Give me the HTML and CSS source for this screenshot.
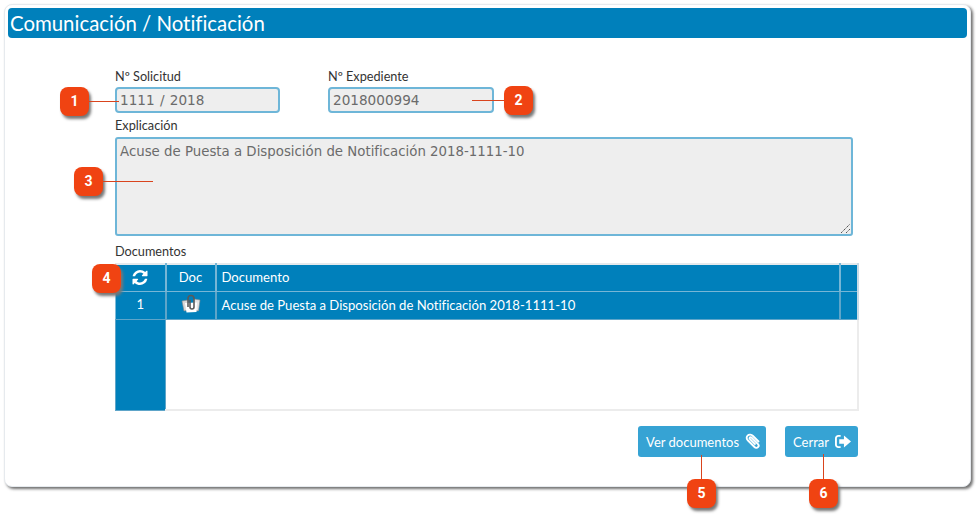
FILE: index.html
```html
<!DOCTYPE html>
<html lang="es">
<head>
<meta charset="utf-8">
<title>Comunicación / Notificación</title>
<link rel="stylesheet" href="styles.css">
</head>
<body>
<main class="panel">
  <h1 class="title">Comunicación / Notificación</h1>
  <div class="form">
    <div class="row">
      <div class="field first">
        <label class="label">Nº Solicitud</label>
        <div class="input">1111 / 2018</div>
      </div>
      <div class="field second">
        <label class="label">Nº Expediente</label>
        <div class="input">2018000994</div>
      </div>
    </div>
    <label class="label expl">Explicación</label>
    <div class="textarea">Acuse de Puesta a Disposición de Notificación 2018-1111-10
      <svg class="grip" width="11" height="11" viewBox="0 0 11 11"><path d="M1 10 10 1M6 10l4-4" stroke="#555" stroke-width="1" stroke-dasharray="1.5 .6" fill="none"/></svg>
    </div>
    <label class="label docs">Documentos</label>
    <table class="grid">
      <colgroup><col class="c1"><col class="c2"><col><col class="c4"></colgroup>
      <thead>
        <tr>
          <th class="center"><svg class="refresh" width="16" height="15" viewBox="0 0 1536 1536"><path fill="#fff" d="M1511 928q0 5-1 7-64 268-268 434.500T764 1536q-146 0-282.500-55T238 1324l-129 129q-19 19-45 19t-45-19-19-45V960q0-26 19-45t45-19h448q26 0 45 19t19 45-19 45l-137 137q71 66 161 102t187 36q134 0 250-65t186-179q11-17 53-117 8-23 30-23h192q13 0 22.500 9.500t9.500 22.500zm25-800v448q0 26-19 45t-45 19h-448q-26 0-45-19t-19-45 19-45l138-138Q969 256 768 256q-134 0-250 65T332 500q-11 17-53 117-8 23-30 23H50q-13 0-22.500-9.500T18 608v-7q65-268 270-434.500T768 0q146 0 284 55.500T1297 212l130-129q19-19 45-19t45 19 19 45z"/></svg></th>
          <th class="center">Doc</th>
          <th>Documento</th>
          <th></th>
        </tr>
      </thead>
      <tbody>
        <tr class="data">
          <td class="center"><span class="num">1</span></td>
          <td class="center"><svg class="clip" width="20" height="20" viewBox="0 0 20 20"><path d="M1 7l6-1 1 10-5 1Z" fill="#d8d8d8" stroke="#8a8a8a" stroke-width=".6"/><path d="M13 5l6 1-1.500 11-5.500-1Z" fill="#e4e4e4" stroke="#8a8a8a" stroke-width=".6"/><path d="M4 9l12-.5-.5 9.500-10 .5Z" fill="#fff"/><path d="M7 13V4.500a3 3 0 0 1 6 0V13a2 2 0 0 1-4 0V6" fill="none" stroke="#5a5a5a" stroke-width="1.600"/></svg></td>
          <td>Acuse de Puesta a Disposición de Notificación 2018-1111-10</td>
          <td></td>
        </tr>
        <tr class="filler">
          <td></td><td colspan="3"></td>
        </tr>
      </tbody>
    </table>
    <div class="actions">
      <button class="btn wide">Ver documentos
        <svg width="16" height="17" viewBox="0 0 16 17"><path d="M14 9 8 3C6.500 1.500 4 1.200 2.600 2.600S1.400 6 3 7.500l6.500 6.500c1 1 2.500 1.200 3.500.2s.8-2.400-.2-3.400L6.500 4.600c-.6-.6-1.300-.6-1.700-.2s-.4 1.100.2 1.700l5.500 5.500" fill="none" stroke="#fff" stroke-width="1.900"/></svg>
      </button>
      <button class="btn">Cerrar
        <svg width="16" height="15" viewBox="0 0 17 15"><path d="M6 1.500H3.500A2.500 2.500 0 0 0 1 4v7a2.500 2.500 0 0 0 2.500 2.500H6" fill="none" stroke="#fff" stroke-width="2"/><path d="M9.500 1l7.500 6.500L9.500 14v-4H4.500V5h5Z" fill="#fff"/></svg>
      </button>
    </div>
  </div>
</main>

<div class="callout n1">1</div>
<div class="line l1"></div>
<div class="callout n2">2</div>
<div class="line l2"></div>
<div class="callout n3">3</div>
<div class="line l3"></div>
<div class="callout n4">4</div>
<div class="callout n5">5</div>
<div class="line l5"></div>
<div class="callout n6">6</div>
<div class="line l6"></div>
</body>
</html>
```
FILE: styles.css
```css
* { box-sizing: border-box; }
html, body { margin: 0; height: 100%; background: #fff; overflow: hidden; }
body { position: relative; padding: 4px 0 0 4px; font-family: "Lato", "Open Sans", sans-serif; color: #333; font-variant-ligatures: none; }

.panel {
  width: 967px;
  height: 483px;
  padding: 3px 3px 0 3px;
  background: #fff;
  border: 1px solid #e6eaee;
  border-radius: 8px;
  box-shadow: 2px 2px 3px #6f6f6f;
}
.title {
  margin: 0;
  height: 30px;
  padding-left: 2px;
  background: #0080bb;
  border-radius: 4px;
  color: #fff;
  font-size: 20.400px;
  font-weight: 400;
  line-height: 30px;
}
.form { padding: 29px 0 0 107px; }
.row { display: flex; }
.field { display: flex; flex-direction: column; }
.first { width: 213px; }
.second { width: 166px; }
.label { display: block; font-size: 12.700px; line-height: 19px; height: 20px; color: #333; }
.input {
  height: 26px;
  padding-left: 3px;
  background: #eee;
  border: 2px solid #6eb6d8;
  border-radius: 4px;
  font-family: "DejaVu Sans", sans-serif;
  font-size: 13.600px;
  line-height: 22px;
  color: #6b6b6b;
}
.first .input { width: 165px; word-spacing: 1px; }
.second .input { width: 166px; }
.expl { margin-top: 3px; height: 21px; }
.textarea {
  position: relative;
  width: 738px;
  height: 99px;
  padding: 4px 3px;
  background: #eee;
  border: 2px solid #6eb6d8;
  border-radius: 3px;
  font-family: "DejaVu Sans", sans-serif;
  font-size: 13.330px;
  line-height: 18px;
  color: #6b6b6b;
}
.grip { position: absolute; right: 0; bottom: 0; }
.docs { margin-top: 5px; height: 22px; padding-top: 1px; }

.grid {
  width: 744px;
  height: 148px;
  border-collapse: collapse;
  table-layout: fixed;
  font-size: 13.100px;
  color: #fff;
}
.c1, .c2 { width: 50px; }
.c4 { width: 18px; }
.grid th, .grid td {
  padding: 0 0 0 5px;
  font-weight: 400;
  text-align: left;
  background: #0080bb;
  border: 2px solid #7fbcd9;
  border-top-width: 1px;
  border-bottom-width: 1px;
}
.grid th { height: 27px; padding-bottom: 1px; border-color: #76b6d6; border-top: 2px solid #e4e9ec; }
.grid th:first-child, .grid td:first-child { border-left: 1px solid #7fbcd9; }
.grid th:last-child, .grid tr.data td:last-child { border-right: 2px solid #c9dbe6; }
.grid .center { padding-left: 0; text-align: center; }
.center svg { display: block; margin: 0 auto; }
.center .clip { margin-top: -3px; }
.data td { height: 28px; border-color: #5ea5c9; border-top-color: #7fbcd9; }
.data .num { position: relative; top: -1px; }
.filler td:first-child { background: #0080bb; border: 1px solid #5ea5c9; }
.filler td:last-child { background: #fff; border: 0; border-right: 2px solid #ececec; border-bottom: 2px solid #ececec; }

.actions {
  display: flex;
  justify-content: flex-end;
  gap: 19px;
  width: 743px;
  margin-top: 15px;
  align-items: flex-end;
}
.btn {
  display: flex;
  align-items: center;
  gap: 6px;
  height: 31px;
  padding: 0 7px 0 8px;
  background: #36a3d4;
  border: 0;
  border-radius: 3px;
  color: #fff;
  font-family: inherit;
  font-size: 13px;
}
.wide { padding-right: 5px; }
.callout {
  position: absolute;
  width: 29px;
  height: 29px;
  background: #f04312;
  border-radius: 8px;
  box-shadow: 2px 3px 3px #777;
  color: #fff;
  font: 700 14px/29px "Roboto", sans-serif;
  text-align: center;
}
.n1 { left: 60px; top: 87px; }
.n2 { left: 504px; top: 86px; }
.n3 { left: 74px; top: 167px; }
.n4 { left: 92px; top: 264px; }
.n5 { left: 687px; top: 479px; }
.n6 { left: 809px; top: 479px; }
.line { position: absolute; background: #d9441d; }
.l1 { left: 89px; top: 101px; width: 30px; height: 1px; }
.l2 { left: 472px; top: 100px; width: 32px; height: 1px; }
.l3 { left: 103px; top: 181px; width: 50px; height: 1px; }
.l5 { left: 701px; top: 455px; width: 1px; height: 24px; }
.l6 { left: 823px; top: 454px; width: 1px; height: 25px; }
```
